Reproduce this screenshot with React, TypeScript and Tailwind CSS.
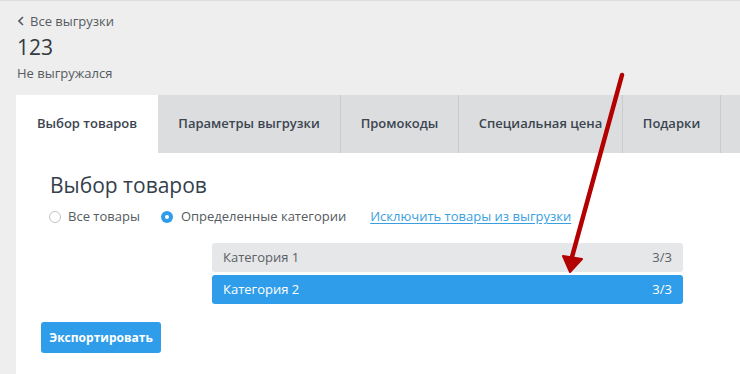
export default function App() {
  const tabs = [
    { label: 'Выбор товаров', w: 'w-[142px]', active: true },
    { label: 'Параметры выгрузки', w: 'w-[183px]' },
    { label: 'Промокоды', w: 'w-[118px]' },
    { label: 'Специальная цена', w: 'w-[164px]' },
    { label: 'Подарки', w: 'w-[98px]' },
  ];

  return (
    <div
      className="relative w-[740px] h-[374px] overflow-hidden bg-[#eeeeee] border-t border-[#dddddd] flex flex-col"
      style={{ fontFamily: '"Open Sans", "Noto Sans", sans-serif' }}
    >
      <div className="pl-[17px] pt-[11px]">
        <div className="flex items-center gap-[6px] text-[13px] leading-[18px] text-[#555b61]">
          <svg width="6" height="10" viewBox="0 0 6 10" className="ml-[1px]">
            <path d="M5 1 L1 5 L5 9" fill="none" stroke="#555b61" strokeWidth="1.6" />
          </svg>
          <span>Все выгрузки</span>
        </div>
        <div className="mt-[3px] text-[21px] leading-[28px] text-[#333a40]">123</div>
        <div className="mt-[3px] text-[13px] leading-[18px] text-[#555b61]">Не выгружался</div>
      </div>

      <div className="ml-[16px] mt-[13px] flex h-[58px] bg-[#dcdddf]">
        {tabs.map((t) => (
          <div
            key={t.label}
            className={`${t.w} flex items-center justify-center text-[13px] font-semibold text-[#3b4550] ${
              t.active ? 'bg-white' : 'border-r border-[#c9cbcd]'
            }`}
          >
            {t.label}
          </div>
        ))}
        <div className="flex-1" />
      </div>

      <div className="ml-[16px] flex-1 bg-white px-[25px] pt-[17px]">
        <h1 className="pl-[9px] text-[21px] leading-[30px] text-[#34404b]">Выбор товаров</h1>

        <div className="mt-[7px] pl-[8px] flex items-center h-[20px] text-[13px] text-[#555b61]">
          <span className="w-[12px] h-[12px] rounded-full border border-[#c4c4c4] bg-white" />
          <span className="ml-[7px]">Все товары</span>
          <span className="ml-[21px] w-[12px] h-[12px] rounded-full bg-[#2f9de9] flex items-center justify-center">
            <span className="w-[4px] h-[4px] rounded-full bg-white" />
          </span>
          <span className="ml-[8px]">Определенные категории</span>
          <a className="ml-[24px] text-[#3a9fe0] underline underline-offset-2">Исключить товары из выгрузки</a>
        </div>

        <div className="mt-[16px] ml-[171px] w-[471px] flex flex-col gap-[3px] text-[13px]">
          <div className="h-[29px] rounded-[3px] bg-[#e6e7e8] px-[11px] flex items-center justify-between text-[#5b6167]">
            <span>Категория 1</span>
            <span>3/3</span>
          </div>
          <div className="h-[29px] rounded-[3px] bg-[#2f9de9] px-[11px] flex items-center justify-between text-white">
            <span>Категория 2</span>
            <span>3/3</span>
          </div>
        </div>

        <button className="mt-[18px] h-[31px] w-[120px] rounded-[3px] bg-[#2f9de9] text-[12px] font-bold text-white">
          Экспортировать
        </button>
      </div>

      <svg className="absolute left-0 top-0 pointer-events-none" width="740" height="374" viewBox="0 0 740 374">
        <path d="M622 74 L572 256" stroke="#b30000" strokeWidth="4.5" strokeLinecap="round" fill="none" />
        <path d="M563 255 L570 271 L582 258 Z" fill="#b30000" stroke="#b30000" strokeWidth="2" strokeLinejoin="round" />
      </svg>
    </div>
  );
}
